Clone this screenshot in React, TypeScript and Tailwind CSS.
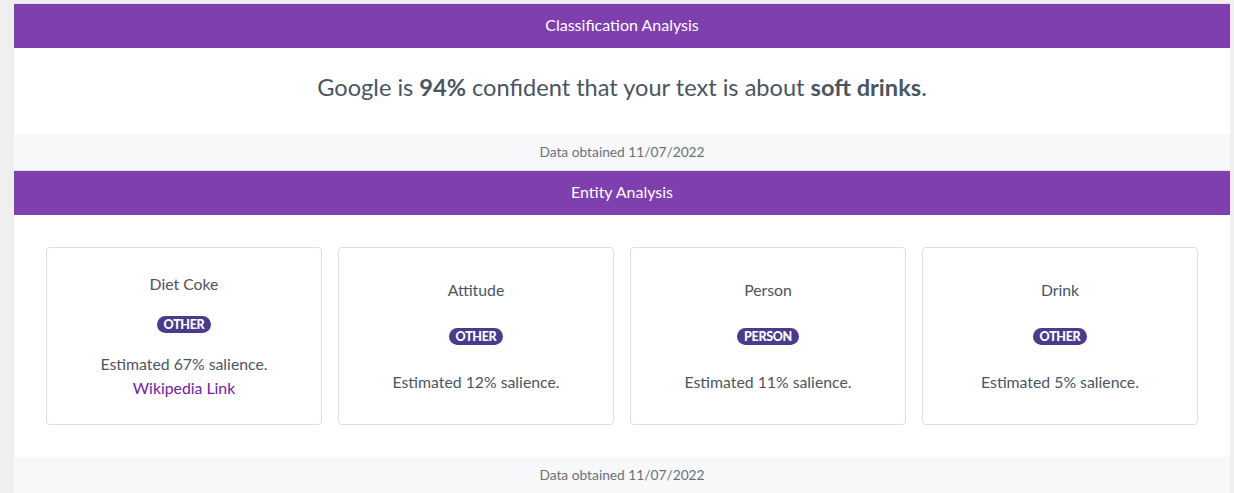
import React from 'react'

const PURPLE = 'bg-[#803fae]'

type Entity = {
  name: string
  type: string
  salience: number
  wiki?: string
}

const entities: Entity[] = [
  { name: 'Diet Coke', type: 'OTHER', salience: 67, wiki: 'https://en.wikipedia.org/wiki/Diet_Coke' },
  { name: 'Attitude', type: 'OTHER', salience: 12 },
  { name: 'Person', type: 'PERSON', salience: 11 },
  { name: 'Drink', type: 'OTHER', salience: 5 },
]

const SectionHeader = ({ title }: { title: string }) => (
  <div className={`${PURPLE} h-[44px] pb-[3px] flex items-center justify-center text-white text-[16px]`}>
    {title}
  </div>
)

const SectionFooter = () => (
  <div className="h-[36px] bg-[#f7f8fa] flex items-center justify-center text-[13.75px] text-[#6c7178]">
    Data obtained 11/07/2022
  </div>
)

const EntityCard = ({ entity }: { entity: Entity }) => (
  <div className="h-[178px] border border-[#dedede] rounded-[4px] bg-white flex flex-col justify-evenly items-center text-[15.8px] text-[#4a5562]">
    <div className="leading-[24px]">{entity.name}</div>
    {/* badge sits in a short row so the spacing matches */}
    <div className="h-[8px] flex items-center justify-center">
      <span className="bg-[#4b3b8f] text-white text-[12.5px] font-black leading-[17px] h-[17px] px-[7px] rounded-full tracking-tight">
        {entity.type}
      </span>
    </div>
    <div className="leading-[24px] text-center">
      Estimated {entity.salience}% salience.
      {entity.wiki && (
        <>
          <br />
          <a href={entity.wiki} className="text-[#6f22a8]">
            Wikipedia Link
          </a>
        </>
      )}
    </div>
  </div>
)

export default function App() {
  return (
    <div
      className="min-h-[493px] bg-[#efefef] pt-[3px] pl-[14px] pr-[4px]"
      style={{ fontFamily: 'Lato, "Open Sans", sans-serif' }}
    >
      <div className="bg-white border-t border-[#e2e2e2]">
        <SectionHeader title="Classification Analysis" />
        <div className="h-[86px] pb-[6px] flex items-center justify-center text-[23.6px] text-[#4a5562]">
          <p>
            Google is <span className="font-bold">94%</span> confident that your text is about{' '}
            <span className="font-bold">soft drinks</span>.
          </p>
        </div>
        <SectionFooter />
      </div>
      <div className="bg-white border-t border-[#e2e2e2]">
        <SectionHeader title="Entity Analysis" />
        <div className="grid grid-cols-4 gap-[16px] p-[32px]">
          {entities.map((e) => (
            <EntityCard key={e.name} entity={e} />
          ))}
        </div>
        <SectionFooter />
      </div>
    </div>
  )
}
